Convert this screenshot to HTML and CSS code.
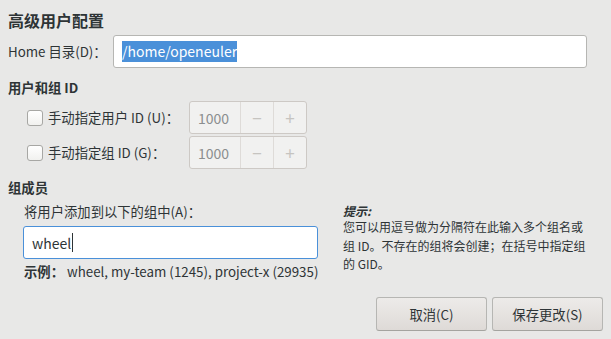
FILE: index.html
```html
<!DOCTYPE html>
<html>
<head>
  <meta charset="utf-8">
  <title>高级用户配置</title>
  <link rel="stylesheet" href="styles.css">
</head>
<body>
  <div class="dialog">
    <h1 class="title">高级用户配置</h1>

    <div class="home-row">
      <label class="home-label">Home 目录(D)：</label>
      <div class="entry home-entry"><span class="selected">/home/openeuler</span></div>
    </div>

    <h2 class="section">用户和组 ID</h2>
    <div class="id-rows">
      <div class="id-row">
        <span class="check"></span>
        <span class="id-label">手动指定用户 ID (U)：</span>
        <div class="spin">
          <span class="spin-value">1000</span>
          <span class="spin-btn">−</span>
          <span class="spin-btn">+</span>
        </div>
      </div>
      <div class="id-row">
        <span class="check"></span>
        <span class="id-label">手动指定组 ID (G)：</span>
        <div class="spin">
          <span class="spin-value">1000</span>
          <span class="spin-btn">−</span>
          <span class="spin-btn">+</span>
        </div>
      </div>
    </div>

    <h2 class="section section-groups">组成员</h2>
    <div class="groups">
      <div class="groups-main">
        <div class="groups-label">将用户添加到以下的组中(A)：</div>
        <div class="entry focused">wheel<span class="caret"></span></div>
        <div class="example">
          <b class="example-key">示例：</b>
          <span>wheel, my-team (1245), project-x (29935)</span>
        </div>
      </div>
      <div class="hint">
        <em class="hint-title">提示:</em>
        <p class="hint-text">您可以用逗号做为分隔符在此输入多个组名或<br>组 ID。不存在的组将会创建；在括号中指定组<br>的 GID。</p>
      </div>
    </div>

    <div class="actions">
      <button class="button" type="button">取消(C)</button>
      <button class="button" type="button">保存更改(S)</button>
    </div>
  </div>
</body>
</html>
```

FILE: styles.css
```css
html, body {
  margin: 0;
  padding: 0;
}

body {
  background-color: #e8e8e7;
  color: #2e3436;
  font-family: "Noto Sans CJK SC", "Noto Sans", sans-serif;
  font-size: 13.33px;
}

.dialog {
  box-sizing: border-box;
  height: 339px;
  padding: 10px 8px 8px 8px;
  display: flex;
  flex-direction: column;
}

.title {
  margin: 0;
  font-size: 16px;
  line-height: 20px;
  font-weight: bold;
}

/* home directory */
.home-row {
  margin-top: 5px;
  display: flex;
  align-items: center;
}

.home-label {
  width: 105px;
  line-height: 18px;
}

.entry {
  box-sizing: border-box;
  height: 33px;
  display: flex;
  align-items: center;
  padding: 0 8px;
  background-color: #ffffff;
  border: 1px solid #b6b6b3;
  border-radius: 3px;
  font-size: 14px;
}

.home-entry {
  width: 474px;
}

.selected {
  background-color: #4a90d9;
  color: #ffffff;
  line-height: 21px;
}

/* sections */
.section {
  margin: 11px 0 0 0;
  font-size: 13.33px;
  line-height: 18px;
  font-weight: bold;
}

.section-groups {
  margin-top: 10px;
}

.id-rows {
  margin: 4px 0 0 19px;
  display: flex;
  flex-direction: column;
  gap: 2px;
}

.id-row {
  display: flex;
  align-items: center;
  height: 33px;
}

.check {
  box-sizing: border-box;
  width: 16px;
  height: 16px;
  margin-right: 5px;
  border: 1px solid #a7a7a4;
  border-radius: 3px;
  background: linear-gradient(#ffffff, #f1f1ef);
}

.id-label {
  width: 141px;
  line-height: 18px;
}

.spin {
  box-sizing: border-box;
  width: 118px;
  height: 33px;
  display: flex;
  background-color: #f1f1f0;
  border: 1px solid #cdc9c5;
  border-radius: 3px;
  color: #8b8e8f;
}

.spin-value {
  width: 51px;
  padding-left: 8px;
  box-sizing: border-box;
  display: flex;
  align-items: center;
  font-size: 14px;
}

.spin-btn {
  width: 33px;
  display: flex;
  align-items: center;
  justify-content: center;
  border-left: 1px solid #dedbd8;
  color: #c6c4c0;
  font-size: 17px;
}

/* group membership */
.groups {
  margin-top: 6px;
  display: flex;
  gap: 25px;
}

.groups-main {
  margin-left: 15px;
  width: 295px;
}

.groups-label {
  line-height: 18px;
  padding-left: 1px;
}

.groups-main .entry {
  margin-top: 5px;
}

.focused {
  border-color: #4a90d9;
}

.caret {
  display: inline-block;
  width: 1px;
  height: 19px;
  margin-left: 1px;
  background-color: #2e3436;
}

.example {
  margin-top: 4px;
  padding-left: 1px;
  line-height: 18px;
  display: flex;
  white-space: nowrap;
}

.example-key {
  width: 43px;
  flex-shrink: 0;
}

.hint {
  width: 262px;
  font-size: 12px;
}

.hint-title {
  display: block;
  font-weight: bold;
  line-height: 15px;
}

.hint-text {
  margin: 0;
  line-height: 18.5px;
}

/* buttons */
.actions {
  margin-top: auto;
  display: flex;
  justify-content: flex-end;
  gap: 5px;
}

.button {
  box-sizing: border-box;
  width: 111px;
  height: 34px;
  font-family: inherit;
  font-size: 13.33px;
  color: #2e3436;
  background: linear-gradient(#edebe9, #dedad7);
  border: 1px solid #b6b6b3;
  border-bottom-color: #a4a4a0;
  border-radius: 3px;
}
```
